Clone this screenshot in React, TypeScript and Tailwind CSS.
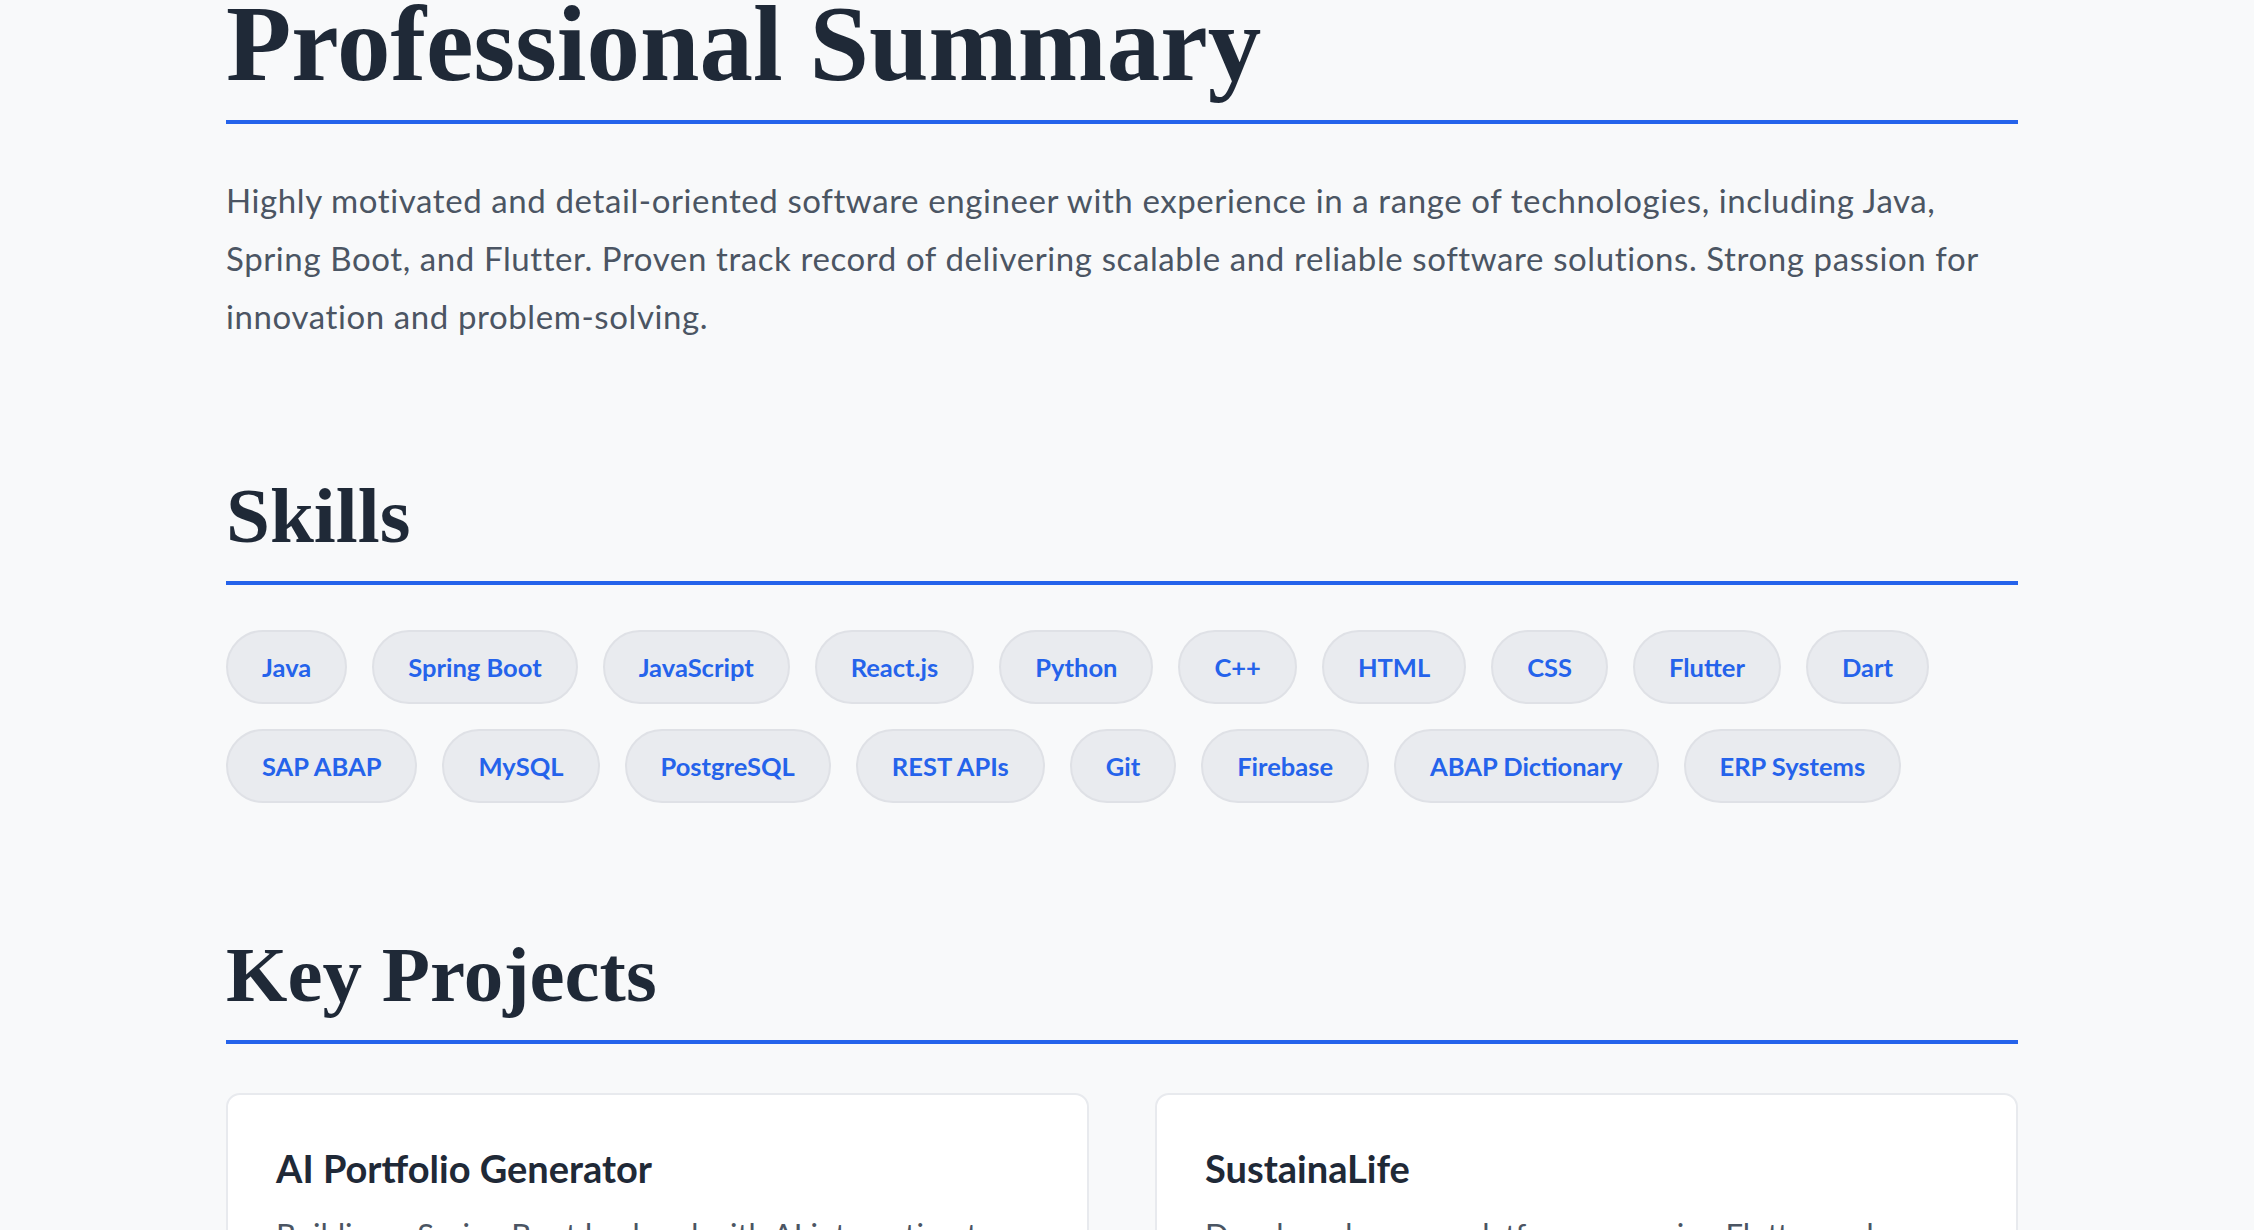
import React from "react";

const skills = [
  "Java",
  "Spring Boot",
  "JavaScript",
  "React.js",
  "Python",
  "C++",
  "HTML",
  "CSS",
  "Flutter",
  "Dart",
  "SAP ABAP",
  "MySQL",
  "PostgreSQL",
  "REST APIs",
  "Git",
  "Firebase",
  "ABAP Dictionary",
  "ERP Systems",
];

const projects = [
  {
    title: "AI Portfolio Generator",
    text: "Building a Spring Boot backend with AI integration to generate personalised portfolio websites from a simple set of user inputs.",
  },
  {
    title: "SustainaLife",
    text: "Developed a cross-platform app using Flutter and Firebase that helps users track and reduce their everyday carbon footprint.",
  },
];

function SectionTitle({ children, big }: { children: React.ReactNode; big?: boolean }) {
  return (
    <h2
      className={
        big
          ? "font-['Liberation_Serif',serif] font-bold text-[107px] leading-[107px] text-[#1f2937] -mt-[9px] pb-[22px] border-b-4 border-[#2563eb]"
          : "font-['Liberation_Serif',serif] font-bold text-[79px] leading-[80px] text-[#1f2937] pb-[25px] border-b-4 border-[#2563eb]"
      }
    >
      {children}
    </h2>
  );
}

export default function App() {
  return (
    <div className="min-h-screen bg-[#f8f9fa] font-['Lato','Noto_Sans',sans-serif] overflow-hidden h-[1230px]">
      <div className="ml-[226px] w-[1792px]">
        <section>
          <SectionTitle big>Professional Summary</SectionTitle>
          <p className="mt-[47px] text-[33px] leading-[58px] tracking-[0.6px] text-[#4b5563]">
            Highly motivated and detail-oriented software engineer with experience in a range of technologies, including
            Java, Spring Boot, and Flutter. Proven track record of delivering scalable and reliable software solutions.
            Strong passion for innovation and problem-solving.
          </p>
        </section>

        <section className="mt-[131px]">
          <SectionTitle>Skills</SectionTitle>
          <div className="mt-[45px] flex flex-wrap gap-x-[25px] gap-y-[25px]">
            {skills.map((s) => (
              <span
                key={s}
                className="h-[74px] inline-flex items-center px-[34px] rounded-full bg-[#e9ebef] border-2 border-[#dfe1e6] text-[25.5px] font-bold text-[#2563eb]"
              >
                {s}
              </span>
            ))}
          </div>
        </section>

        <section className="mt-[132px]">
          <SectionTitle>Key Projects</SectionTitle>
          <div className="mt-[49px] grid grid-cols-2 gap-[66px]">
            {projects.map((p) => (
              <div key={p.title} className="bg-white border-2 border-[#e8eaee] rounded-[14px] px-[48px] pt-[50px] pb-[48px]">
                <h3 className="text-[38px] leading-[46px] font-bold text-[#1f2937]">{p.title}</h3>
                <p className="mt-[18px] text-[31px] leading-[50px] text-[#4b5563]">{p.text}</p>
              </div>
            ))}
          </div>
        </section>
      </div>
    </div>
  );
}
